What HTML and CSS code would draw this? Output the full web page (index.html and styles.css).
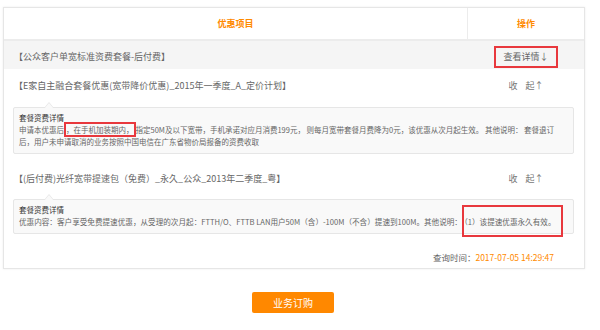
FILE: index.html
```html
<!DOCTYPE html>
<html lang="zh-CN">
<head>
    <meta charset="UTF-8">
    <title>优惠项目</title>
    <link rel="stylesheet" href="styles.css">
</head>
<body>
    <div class="panel">
        <div class="panel-head">
            <div class="col-title">优惠项目</div>
            <div class="col-op">操作</div>
        </div>
        <div class="package-row">
            <div class="row-title">【公众客户单宽标准资费套餐-后付费】</div>
            <div class="row-op"><span class="btn-detail">查看详情↓</span></div>
        </div>

        <div class="offer-row">
            <div class="row-title">【E家自主融合套餐优惠(宽带降价优惠)_2015年一季度_A_定价计划】</div>
            <div class="row-op">收&nbsp;&nbsp;&nbsp;&nbsp;起↑</div>
        </div>
        <div class="offer-detail">
            <div class="detail-title">套餐资费详情</div>
            <div class="detail-text">申请本优惠后<span class="mark">，在手机加装期内，</span>指定50M及以下宽带，手机承诺对应月消费199元， 则每月宽带套餐月费降为0元，该优惠从次月起生效。 其他说明： 套餐退订<br>后，用户未申请取消的业务按照中国电信在广东省物价局报备的资费收取</div>
        </div>

        <div class="offer-row">
            <div class="row-title">【(后付费)光纤宽带提速包（免费）_永久_公众_2013年二季度_粤】</div>
            <div class="row-op">收&nbsp;&nbsp;&nbsp;&nbsp;起↑</div>
        </div>
        <div class="offer-detail">
            <div class="detail-title">套餐资费详情</div>
            <div class="detail-text wide">优惠内容：客户享受免费提速优惠，从受理的次月起：FTTH/O、FTTB LAN用户50M（含）-100M（不含）提速到100M。其他说明：<span class="mark mark-big">（1）该提速优惠永久有效。</span></div>
        </div>

        <div class="query-time">查询时间：<span class="time-value">2017-07-05 14:29:47</span></div>
    </div>
    <div class="actions">
        <button class="btn-order">业务订购</button>
    </div>
</body>
</html>
```

FILE: styles.css
```css
body {
    margin: 0;
    font-family: "Noto Sans CJK SC", "Noto Sans", sans-serif;
    color: #666;
    background-color: #fff;
}
.panel {
    width: 580px;
    margin: 7px 0 0 3px;
    border: 1px solid #e6e6e6;
    box-shadow: 0 0 2px rgba(0, 0, 0, 0.08);
    padding-bottom: 4px;
}
.panel-head {
    display: flex;
    height: 31px;
    border-bottom: 2px solid #ececec;
    color: #ff8a00;
    font-size: 9px;
    font-weight: bold;
}
.col-title {
    flex: 1;
    display: flex;
    align-items: center;
    justify-content: center;
    border-right: 1px solid #ececec;
}
.col-op {
    width: 116px;
    display: flex;
    align-items: center;
    justify-content: center;
}
.package-row, .offer-row {
    display: flex;
    align-items: center;
    font-size: 9px;
    color: #666;
}
.package-row {
    height: 25px;
    padding-top: 3px;
    background-color: #f5f5f5;
}
.offer-row {
    height: 32px;
}
.offer-detail + .offer-row {
    margin-top: 8px;
}
.row-title {
    flex: 1;
    padding-left: 10px;
}
.row-op {
    width: 116px;
    text-align: center;
}
.offer-row .row-op {
    color: #777;
}
.btn-detail {
    display: inline-block;
    padding: 2px 7px 3px;
    border: 2px solid #e8383d;
}
.offer-detail {
    position: relative;
    margin: 6px 10px 0 9px;
    padding: 4px 5px 5px;
    background-color: #f9f9f9;
    border: 1px solid #e6e6e6;
    border-radius: 2px;
    font-size: 7.5px;
    line-height: 12px;
}
.offer-detail + .offer-row + .offer-detail {
    margin-top: 5px;
}
.offer-detail::before,
.offer-detail::after {
    content: "";
    position: absolute;
    left: 30px;
    border: 5px solid transparent;
    border-top: 0;
}
.offer-detail::before {
    top: -6px;
    border-bottom: 6px solid #e6e6e6;
}
.offer-detail::after {
    top: -5px;
    border-bottom: 6px solid #f9f9f9;
}
.detail-title {
    color: #333;
}
.detail-text {
    white-space: nowrap;
}
.detail-text.wide {
    font-size: 7.6px;
}
.mark {
    border: 2px solid #e8383d;
}
.mark-big {
    padding: 9px 5px 8px 0;
}
.query-time {
    margin-top: 16px;
    padding-right: 30px;
    text-align: right;
    font-size: 8.5px;
    line-height: 14px;
}
.time-value {
    color: #ff8a00;
}
.actions {
    width: 586px;
    margin-top: 19px;
    text-align: center;
}
.btn-order {
    width: 82px;
    height: 21px;
    border: none;
    border-radius: 2px;
    background-color: #ff8800;
    color: #fff;
    font-family: "Noto Sans CJK SC", sans-serif;
    font-size: 10px;
    cursor: pointer;
}
```
